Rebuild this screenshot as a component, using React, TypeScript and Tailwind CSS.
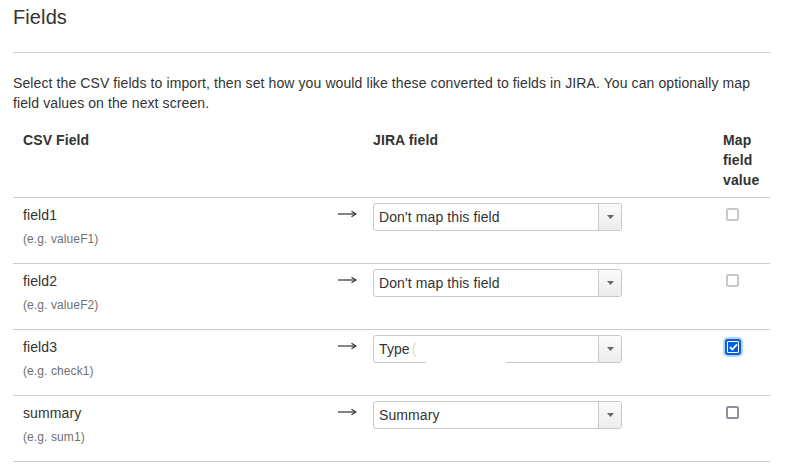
import React from 'react';

type Row = {
    name: string;
    example: string;
    jira: string;
    checked: boolean;
    dark?: boolean;
    redacted?: boolean;
};

const rows: Row[] = [
    { name: 'field1', example: 'valueF1', jira: "Don't map this field", checked: false },
    { name: 'field2', example: 'valueF2', jira: "Don't map this field", checked: false },
    { name: 'field3', example: 'check1', jira: 'Type', checked: true, redacted: true },
    { name: 'summary', example: 'sum1', jira: 'Summary', checked: false, dark: true },
];

function Arrow() {
    return (
        <svg width="19" height="8" viewBox="0 0 19 8" className="block">
            <path d="M0 4h17.5" stroke="#333" strokeWidth="1.2" />
            <path d="M13.5 1.2L18 4l-4.5 2.8" fill="none" stroke="#333" strokeWidth="1.2" />
        </svg>
    );
}

function Select({ value, redacted }: { value: string; redacted?: boolean }) {
    return (
        <div className="relative flex h-[28px] w-[249px] items-stretch rounded-[3px] border border-[#c8c8c8] bg-white">
            <div className="flex flex-1 items-center pl-[5px] text-[14px] text-[#333]">
                {value}
                {redacted && <span className="ml-[2px] text-[#e8d8c8]">(</span>}
            </div>
            <div className="flex w-[23px] items-center justify-center rounded-r-[3px] border-l border-[#c8c8c8] bg-gradient-to-b from-[#fbfbfb] to-[#ececec]">
                <svg width="7" height="4" viewBox="0 0 7 4">
                    <path d="M0 0h7L3.5 4z" fill="#666" />
                </svg>
            </div>
            {/* redacted value */}
            {redacted && <div className="absolute left-[52px] top-[4px] h-[28px] w-[80px] bg-white" />}
        </div>
    );
}

function Checkbox({ checked, dark }: { checked: boolean; dark?: boolean }) {
    if (checked) {
        return (
            <span className="mt-[2px] ml-[2px] flex h-[16px] w-[16px] items-center justify-center rounded-[3px] border-2 border-[#0b5cd5] bg-[#0060df] shadow-[inset_0_0_0_1px_white,0_0_0_2px_#b0d4ff]">
                <svg width="9" height="8" viewBox="0 0 9 8">
                    <path d="M1 4.2l2.3 2.3L8 1.3" fill="none" stroke="white" strokeWidth="1.8" />
                </svg>
            </span>
        );
    }
    return (
        <span
            className={
                dark
                    ? 'mt-[3px] ml-[3px] block h-[13px] w-[13px] rounded-[2px] border-2 border-[#8f8f9d] bg-white'
                    : 'mt-[3px] ml-[3px] block h-[13px] w-[13px] rounded-[2px] border-2 border-[#c9c9cc] bg-white'
            }
        />
    );
}

export default function App() {
    return (
        <div className="min-h-[472px] bg-white px-[13px] font-['Liberation_Sans',Arial,sans-serif] tracking-[0.1px] text-[#333]">
            <h2 className="pt-[5px] text-[20px] leading-[24px] font-normal">Fields</h2>
            <div className="mt-[23px] w-[757px] border-t border-[#cccccc]" />

            <p className="mt-[20px] w-[757px] text-[14px] leading-[20px]">
                Select the CSV fields to import, then set how you would like these converted to fields in JIRA. You can optionally map field values on the next screen.
            </p>

            {/* Mapping table */}
            <div className="mt-[10px] w-[757px] text-[14px] leading-[20px]">
                <div className="grid grid-cols-[317px_33px_350px_57px] border-b border-[#cccccc] font-bold">
                    <div className="px-[10px] py-[7px]">CSV Field</div>
                    <div />
                    <div className="px-[10px] py-[7px]">JIRA field</div>
                    <div className="pl-[10px] py-[7px]">Map field value</div>
                </div>

                {rows.map((row) => (
                    <div key={row.name} className="grid h-[66px] grid-cols-[317px_33px_350px_57px] border-b border-[#cccccc]">
                        <div className="px-[10px] pt-[7px]">
                            <div>{row.name}</div>
                            <div className="mt-[5px] text-[12px] leading-[18px] text-[#707070]">(e.g. {row.example})</div>
                        </div>
                        <div className="pt-[12px] pl-[8px]">
                            <Arrow />
                        </div>
                        <div className="px-[10px] pt-[5px]">
                            <Select value={row.jira} redacted={row.redacted} />
                        </div>
                        <div className="pl-[10px] pt-[7px]">
                            <Checkbox checked={row.checked} dark={row.dark} />
                        </div>
                    </div>
                ))}
            </div>
        </div>
    );
}
